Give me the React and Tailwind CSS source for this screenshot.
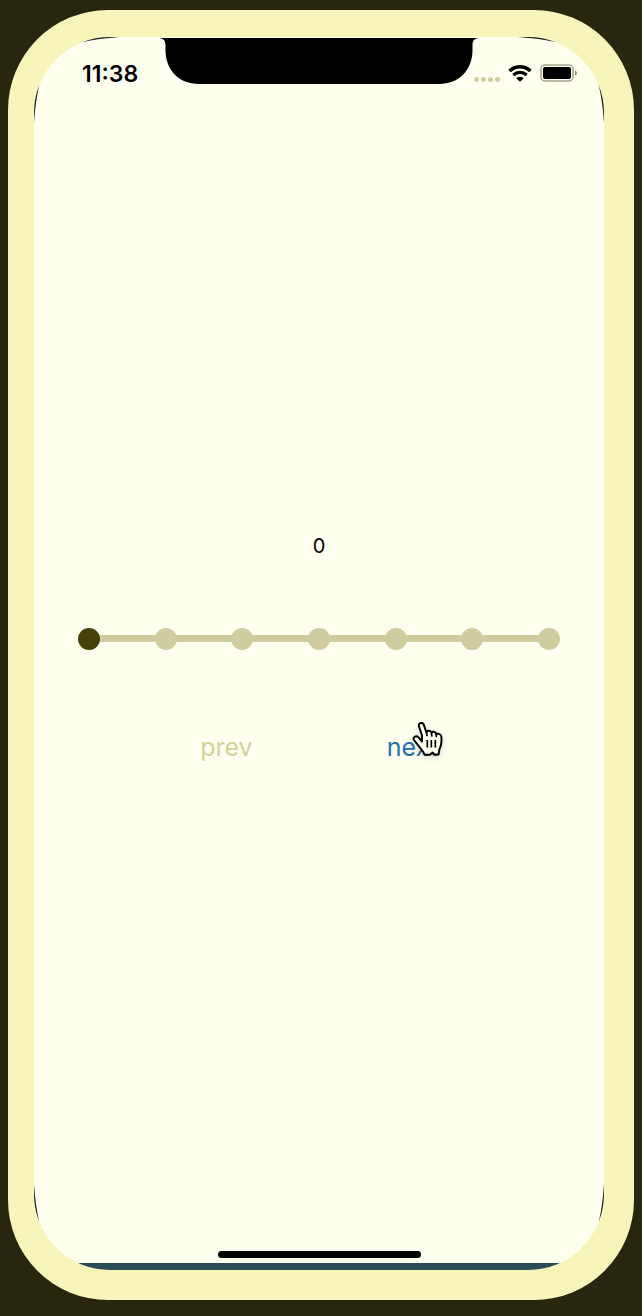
import { Fragment, useState } from 'react';

const STEPS = [0, 1, 2, 3, 4, 5, 6];

const Notch = () => (
  <svg viewBox="0 0 322 47" className="-mx-2 w-[322px] h-[47px]" aria-hidden="true">
    <path d="M0 1H322C317 1 314.500 3.500 314.500 8V13C314.500 33 301 47 281 47H41C21 47 7.500 33 7.500 13V8C7.500 3.500 5 1 0 1Z" fill="#000" />
  </svg>
);

const WifiIcon = () => (
  <svg viewBox="0 0 24 17" className="w-6 h-[17px] shrink-0" aria-hidden="true">
    <path d="M1.500 6C7.500 .3 16.500 .3 22.500 6" fill="none" stroke="#000" strokeWidth="3.500" />
    <path d="M5.300 10C9.200 6.500 14.800 6.500 18.700 10" fill="none" stroke="#000" strokeWidth="3.200" />
    <path d="M8.300 13.200C10.500 11.200 13.500 11.200 15.700 13.200L12 16.800Z" fill="#000" />
  </svg>
);

const BatteryIcon = () => (
  <svg viewBox="0 0 38 18" className="w-[38px] h-[18px] shrink-0" aria-hidden="true">
    <rect x="1" y="1" width="32" height="16" rx="4" fill="none" stroke="#a5a58c" strokeWidth="1.500" />
    <rect x="3" y="3" width="28" height="12" rx="2" fill="#000" />
    <path d="M35 6.500C37.500 7.500 37.500 10.500 35 11.500Z" fill="#8b8b74" />
  </svg>
);

const HandPointer = () => (
  <svg viewBox="0 0 32 36" className="pointer-events-none absolute left-[25px] -top-[10px] w-8 h-9 drop-shadow-md" aria-hidden="true">
    <path
      d="M10 20.500L6.500 16.300C3.800 14 .500 16.300 2 19L5.500 23.500C7.500 26.500 11.500 30 12.500 33.800H18L20.500 31.500L22.500 33.500H26.500L27.500 28C29.800 24 29.500 20.500 29.500 16.500C29.500 13.500 26.500 12 24.200 13C23.800 10.800 21 10 19.500 11.800C18.800 9.200 15.500 9 14.500 11.500L11.500 3.200C9.800 .500 6 2.500 7 5.500L10 14.500Z"
      fill="#fffff0" stroke="#000" strokeWidth="2" strokeLinejoin="round" strokeLinecap="round"
    />
    <path d="M14.500 11.500L15 14.500M19.500 12L19.800 15M24.200 13L24.300 15.500" stroke="#000" strokeWidth="1.700" strokeLinecap="round" />
    <path d="M15.300 19V26.500M19.300 19V26.500M23.300 19V26.500" stroke="#000" strokeWidth="1.700" />
  </svg>
);

// thin dark edge where the glass meets the frame
const EdgeShadow = ({ className, sideOnly }) => (
  <svg viewBox="0 0 88 88" className={`pointer-events-none absolute w-[88px] h-[88px] ${className}`} aria-hidden="true">
    <path d="M5.300 48A76 76 0 0 0 0 76V86Q1.500 64 5.300 48Z" fill="#222" />
    {!sideOnly && <path d="M48 5.300A76 76 0 0 1 76 0H86Q64 1.500 48 5.300Z" fill="#222" />}
  </svg>
);

const StatusBar = () => (
  <header className="grid grid-cols-[1fr_306px_1fr] items-start h-16">
    <div className="pl-12 pt-[25px] text-[23px] leading-6 font-semibold">11:38</div>
    <Notch />
    <div className="flex items-center justify-end gap-2 pr-[26px] pt-[27px]">
      <div className="flex gap-[2px] pt-3">
        {[0, 1, 2, 3].map(i => <span key={i} className="w-[5px] h-[5px] rounded-full bg-[#cfcf9e]" />)}
      </div>
      <WifiIcon />
      <BatteryIcon />
    </div>
  </header>
);

const ProgressSteps = ({ current }) => (
  <div className="flex items-center self-stretch px-11" role="progressbar" aria-label="Progress" aria-valuemin={0} aria-valuemax={6} aria-valuenow={current}>
    {STEPS.map(s => (
      <Fragment key={s}>
        {s > 0 && <span className={`flex-1 h-[7px] -mx-px ${s <= current ? 'bg-[#444208]' : 'bg-[#cfcd9f]'}`} />}
        <span className={`relative w-[22px] h-[22px] rounded-full ${s <= current ? 'bg-[#444208]' : 'bg-[#cfcd9f]'}`} />
      </Fragment>
    ))}
  </div>
);

const App = () => {
  const [step, setStep] = useState(0);

  return (
    <div className="min-h-screen flex flex-col bg-[#28260e] px-2 pt-[10px] pb-4 font-['Inter',sans-serif] text-black">
      <div className="flex-1 flex flex-col rounded-[100px] bg-[#f7f5b9] pl-[26px] pr-[30px] pt-[27px] pb-[30px]">
        <div className="relative flex-1 flex flex-col">
          <div className="flex-1 flex flex-col overflow-hidden rounded-[76px] bg-[#fffff0]">
            <StatusBar />

            <main className="flex-1 flex flex-col items-center justify-center pb-14">
              <p className="text-xl leading-6">{step}</p>
              <div className="self-stretch mt-[70px] mb-[81px]">
                <ProgressSteps current={step} />
              </div>
              <div className="flex gap-[134px] text-[25px] leading-8">
                <button
                  onClick={() => setStep(step - 1)}
                  disabled={step === 0}
                  className="text-[#2472ac] disabled:text-[#d3d398]"
                >
                  prev
                </button>
                <div className="relative">
                  <button
                    onClick={() => setStep(step + 1)}
                    disabled={step === STEPS.length - 1}
                    className="text-[#2472ac] disabled:text-[#d3d398]"
                  >
                    next
                  </button>
                  <HandPointer />
                </div>
              </div>
            </main>

            <footer>
              <div className="mx-auto mb-[5px] w-[203px] h-[7px] rounded-full bg-black" />
              <div className="h-[7px] bg-[#294c56]" />
            </footer>
          </div>
          <EdgeShadow className="left-0 top-0" />
          <EdgeShadow className="right-0 top-0 -scale-x-100" />
          <EdgeShadow className="left-0 bottom-0 -scale-y-100" sideOnly />
          <EdgeShadow className="right-0 bottom-0 -scale-100" sideOnly />
        </div>
      </div>
    </div>
  );
};

export default App;
